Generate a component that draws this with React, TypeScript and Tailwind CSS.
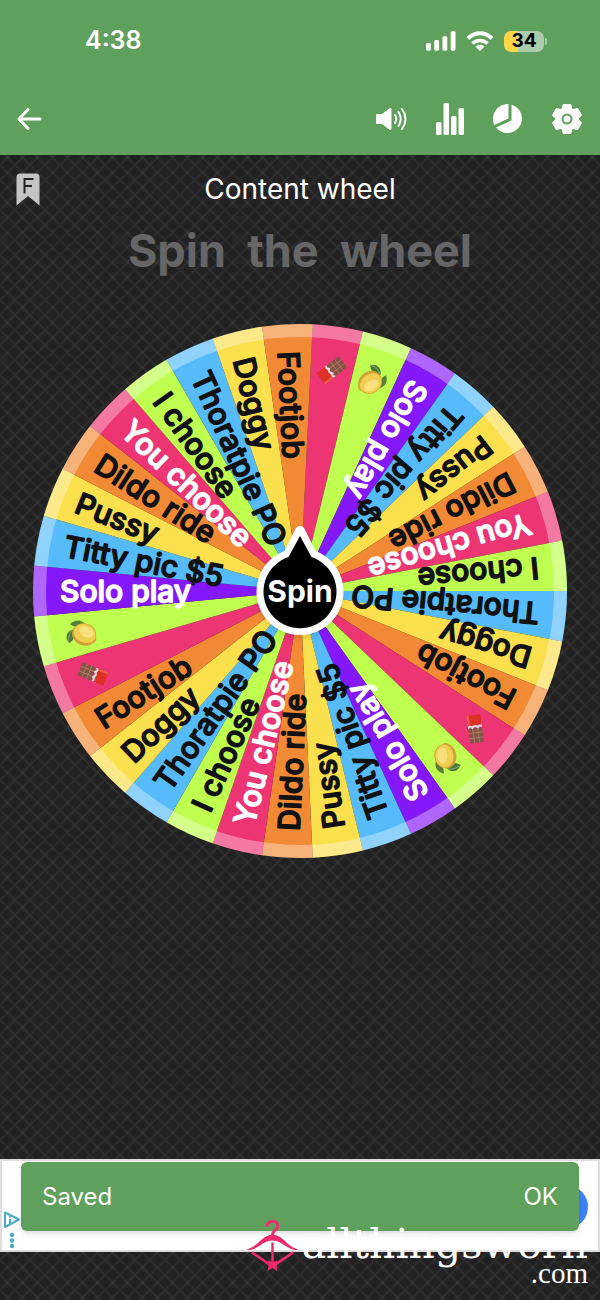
import React, { useState } from 'react';

type Slice = {
  label: string;
  color: string;
  light?: boolean;
  icon?: 'chocolate' | 'lemon';
};

const SLICES: Slice[] = [
  { label: 'Chocolate', color: '#ed3573', icon: 'chocolate' },
  { label: 'Lemon', color: '#bfff4f', icon: 'lemon' },
  { label: 'Solo play', color: '#8418fa', light: true },
  { label: 'Titty pic $5', color: '#55bbfb' },
  { label: 'Pussy', color: '#fbe04e' },
  { label: 'Dildo ride', color: '#f28a35' },
  { label: 'You choose', color: '#ed3573', light: true },
  { label: 'I choose', color: '#bfff4f' },
  { label: 'Thoratpie PO', color: '#55bbfb' },
  { label: 'Doggy', color: '#fbe04e' },
  { label: 'Footjob', color: '#f28a35' },
];

const REPEATS = 3;
const COUNT = SLICES.length * REPEATS;
const STEP = 360 / COUNT;
const RADIUS = 267;

const wedgePath = (start: number, end: number) => {
  const point = (deg: number) => {
    const rad = (deg * Math.PI) / 180;
    return `${RADIUS * Math.sin(rad)} ${-RADIUS * Math.cos(rad)}`;
  };
  return `M0 0 L${point(start)} A${RADIUS} ${RADIUS} 0 0 1 ${point(end)} Z`;
};

const Chocolate: React.FC = () => (
  <g transform="rotate(44)">
    <rect x="-14" y="-7" width="15" height="14" rx="1" fill="#855344" />
    <path d="M-9 -7V7M-4 -7V7M-14 -2.500H1M-14 2.500H1" stroke="#b07f6c" strokeWidth="0.8" />
    <path d="M0 -7l2 2-2 2 2 3-2 3 2 2-1 2h5v-14z" fill="#d9dde2" />
    <path d="M3 -7l1 2-1 2 1 3-1 3 1 2-1 2h11v-14z" fill="#df3028" />
    <path d="M4 -7h10v2h-10z" fill="#ee5f50" />
  </g>
);

const Lemon: React.FC = () => (
  <g transform="rotate(11)">
    <path d="M-7 -4C-14 -3 -17 4 -12 10C-7 7 -5 2 -7 -4Z" fill="#4c7a3c" />
    <path d="M-8 -4C-12 0 -13 5 -12 10" fill="none" stroke="#8bb26a" strokeWidth="0.8" />
    <path d="M-11 -9C-6 -14 0 -14 4 -9C-1 -7 -6 -5 -11 -9Z" fill="#587f38" />
    <g transform="translate(3 1) rotate(28)">
      <path d="M-12 0C-11 -7 -6 -11 1 -11C8 -11 11 -6 12 -3C14 -2 14 3 12 4C10 8 6 11 0 11C-7 11 -12 7 -12 0Z" fill="#d3a236" />
      <path d="M-11 -1C-10 -7 -5 -10 1 -10C8 -10 11 -5 12 -1C11 5 6 8 0 8C-6 8 -11 5 -11 -1Z" fill="#f0cf50" />
      <ellipse cx="1" cy="-3" rx="8" ry="5" fill="#f8e07c" />
    </g>
  </g>
);

const Wheel: React.FC<{ turn: number }> = ({ turn }) => {
  const items = Array.from({ length: COUNT }, (_, i) => ({
    ...SLICES[i % SLICES.length],
    start: STEP / 4 + i * STEP,
  }));

  return (
    <svg viewBox="-267 -267 534 534" className="block w-full" role="img" aria-label="Content wheel">
      <g transform={`rotate(${turn})`}>
        {items.map((item, i) => (
          <path key={i} d={wedgePath(item.start, item.start + STEP)} fill={item.color} />
        ))}
        <circle r="260.500" fill="none" stroke="#fff" strokeOpacity="0.34" strokeWidth="13" />
        {items.map((item, i) => (
          <g key={i} transform={`rotate(${item.start + STEP / 2 - 270})`}>
            {item.icon ? (
              <g transform="translate(-223 0)">{item.icon === 'lemon' ? <Lemon /> : <Chocolate />}</g>
            ) : (
              <text
                x="-240"
                y="11"
                fill={item.light ? '#fff' : '#111'}
                stroke={item.light ? '#fff' : '#111'}
                strokeWidth="1.500"
                strokeLinejoin="round"
                className="font-['Inter',sans-serif] text-[30px] font-medium"
              >
                {item.label}
              </text>
            )}
          </g>
        ))}
      </g>
    </svg>
  );
};

const StatusBar: React.FC = () => (
  <div className="flex h-[82px] items-center justify-between pl-[85px] pr-[53px]">
    <span className="text-[25px] font-semibold">4:38</span>
    <div className="flex items-center gap-[10px]">
      <svg width="30" height="20" viewBox="0 0 31 20" fill="#fff">
        <rect x="0" y="12" width="5" height="8" rx="1.5" />
        <rect x="8.5" y="9" width="5" height="11" rx="1.5" />
        <rect x="17" y="5" width="5" height="15" rx="1.5" />
        <rect x="25.500" y="0" width="5" height="20" rx="1.5" />
      </svg>
      <svg width="28" height="20" viewBox="0 0 28 20" fill="none" stroke="#fff" strokeWidth="4">
        <path d="M2 7.500C9 .5 19 .5 26 7.500" />
        <path d="M6.500 12.500C11 8.500 17 8.500 21.500 12.500" strokeWidth="3.500" />
        <path d="M9.500 15.500C12 13.300 16 13.300 18.500 15.500L14 20Z" fill="#fff" stroke="none" />
      </svg>
      <div className="flex items-center gap-px">
        <div className="flex h-[21px] w-10 items-center justify-center rounded-[7px] bg-linear-to-r from-[#fbd748] from-35% to-[#abcdab] to-35% text-[19px] font-bold text-black">
          34
        </div>
        <div className="h-[7px] w-[2px] rounded-r-full bg-[#abcdab]" />
      </div>
    </div>
  </div>
);

const Toolbar: React.FC = () => (
  <div className="flex h-[73px] items-center justify-between pl-4 pr-[18px]">
    <button type="button" aria-label="Back">
      <svg width="26" height="24" viewBox="0 0 26 24" fill="none" stroke="#fff" strokeWidth="3" strokeLinecap="round" strokeLinejoin="round">
        <path d="M24 12H3M12 2.500L3 12L12 21.500" />
      </svg>
    </button>
    <div className="flex items-center gap-[29px]">
      <button type="button" aria-label="Sound">
        <svg width="31" height="24" viewBox="0 0 31 24" fill="none" stroke="#fff" strokeWidth="2" strokeLinecap="round">
          <path d="M1 7.500h5l8-6h1v21h-1l-8-6h-5z" fill="#fff" stroke="#fff" strokeWidth="1" strokeLinejoin="round" />
          <path d="M19 8Q21.500 12 19 16M22.500 5Q27 12 22.500 19M26 2Q33 12 26 22" />
        </svg>
      </button>
      <button type="button" aria-label="Statistics">
        <svg width="28" height="32" viewBox="0 0 28 32" fill="#fff">
          <rect x="0" y="19" width="5.500" height="13" rx="1.500" />
          <rect x="7.500" y="0" width="5.500" height="32" rx="1.500" />
          <rect x="15" y="13" width="5.500" height="19" rx="1.500" />
          <rect x="22.500" y="5" width="5.500" height="27" rx="1.500" />
        </svg>
      </button>
      <button type="button" aria-label="Chart">
        <svg width="30" height="30" viewBox="0 0 30 30" fill="#fff">
          <path d="M15.500 0A15 15 0 0 0 1.200 21L15.500 14.500Z" />
          <path d="M18.500 0.700A14.500 14.500 0 1 1 3 23.500L18.500 16.500Z" />
        </svg>
      </button>
      <button type="button" aria-label="Settings">
        <svg width="30" height="30" viewBox="-15 -15 30 30" fill="#fff">
          <circle r="11.500" />
          {[0, 60, 120, 180, 240, 300].map(a => (
            <path key={a} transform={`rotate(${a})`} d="M-6 -8L-4.500 -14Q-4.200 -15 -3.200 -15H3.200Q4.200 -15 4.500 -14L6 -8Z" />
          ))}
          <circle r="4.500" fill="none" stroke="#5fa05d" strokeWidth="2" />
        </svg>
      </button>
    </div>
  </div>
);

const AdBanner: React.FC = () => (
  <div className="relative h-[93px] border-2 border-[#dedede] bg-white">
    <div className="absolute right-[10px] top-6 size-11 rounded-full bg-[#3b82f6]" />
    <svg className="absolute left-[2px] top-[50px]" width="17" height="39" viewBox="0 0 17 39" fill="none" stroke="#4aaacb" strokeWidth="2">
      <path d="M1 1.500V16L15 8.500Z" strokeLinejoin="round" />
      <path d="M6 8v5M6 4.800v1.600" />
      <g fill="#4aaacb" stroke="none">
        <circle cx="8" cy="24" r="2.200" />
        <circle cx="8" cy="29.500" r="2.200" />
        <circle cx="8" cy="35" r="2.200" />
      </g>
    </svg>
    <div className="absolute inset-x-[19px] top-px flex h-[69px] items-center justify-between rounded-[6px] bg-[#5fa05d] px-[21px] text-[24px] text-white shadow-md">
      <span>Saved</span>
      <button type="button">OK</button>
    </div>
  </div>
);

const Watermark: React.FC = () => (
  <div className="absolute bottom-[14px] right-3 flex items-end gap-[3px] text-white">
    <svg className="mb-[14px]" width="53" height="53" viewBox="0 0 54 54" fill="none" stroke="#f02b6c" strokeWidth="3">
      <path d="M21.500 8C21 .5 33 .5 32.500 7.500C32 11.500 27 10.500 27 17" />
      <path d="M0 31C12 29 16 16 27 16C38 16 42 29 54 31C43 34 38 22 27 22C16 22 11 34 0 31Z" fill="#f02b6c" stroke="none" />
      <path d="M27 24V47M6 34L25 47M48 34L29 47" strokeWidth="2.500" />
      <path d="M22 42l5 2 5-2-1 5 1 6-5-3-5 3 1-6z" fill="#f02b6c" stroke="none" />
    </svg>
    <div className="flex flex-col items-end">
      <span className="font-['DejaVu_Serif',serif] text-[41px] leading-[32px]">allthingsworn</span>
      <span className="font-['Liberation_Serif',serif] text-[29px] leading-[26px]">.com</span>
    </div>
  </div>
);

const App: React.FC = () => {
  const [turn, setTurn] = useState(0);

  return (
    <div className="relative flex min-h-screen flex-col bg-[#212121] bg-[linear-gradient(45deg,transparent_41%,#ffffff0f_50%,transparent_59%),linear-gradient(-45deg,transparent_41%,#ffffff0f_50%,transparent_59%)] bg-size-[15px_15px] font-['Inter',sans-serif] text-white">
      <header className="bg-[#5fa05d]">
        <StatusBar />
        <Toolbar />
      </header>

      <main className="flex flex-1 flex-col">
        <div className="grid h-[68px] grid-cols-[1fr_auto_1fr] items-center px-4">
          <svg width="24" height="33" viewBox="0 0 24 33">
            <path d="M4 0.500H20Q23.500 .5 23.500 4V32.500L12 23L.5 32.500V4Q.5 .5 4 .5Z" fill="#c4c4c4" />
            <path d="M8.500 20.500V6H17.500M8.500 13H16" fill="none" stroke="#222" strokeWidth="2" />
          </svg>
          <h1 className="text-[28px]">Content wheel</h1>
        </div>
        <p className="whitespace-pre text-center text-[45px] font-bold leading-[56px] text-[#666]">Spin  the  wheel</p>

        <div className="relative mx-[33px] mt-[45px]">
          <Wheel turn={turn} />
          <button
            type="button"
            onClick={() => setTurn(t => t + STEP * 7)}
            className="absolute inset-0 m-auto flex size-[86px] items-center justify-center rounded-full text-[30px] font-bold"
          >
            <svg className="absolute bottom-0 left-0 overflow-visible drop-shadow-md" width="86" height="108" viewBox="0 0 86 108">
              <path d="M43 5L55 29A38.500 38.500 0 1 1 31 29Z" fill="#000" stroke="#fff" strokeWidth="10" strokeLinejoin="round" />
              <path d="M43 10L54.500 31A36.500 36.500 0 1 1 31.500 31Z" fill="#000" />
            </svg>
            <span className="relative">Spin</span>
          </button>
        </div>

        <div className="mt-auto pb-12">
          <AdBanner />
        </div>
      </main>

      <Watermark />
    </div>
  );
};

export default App;
